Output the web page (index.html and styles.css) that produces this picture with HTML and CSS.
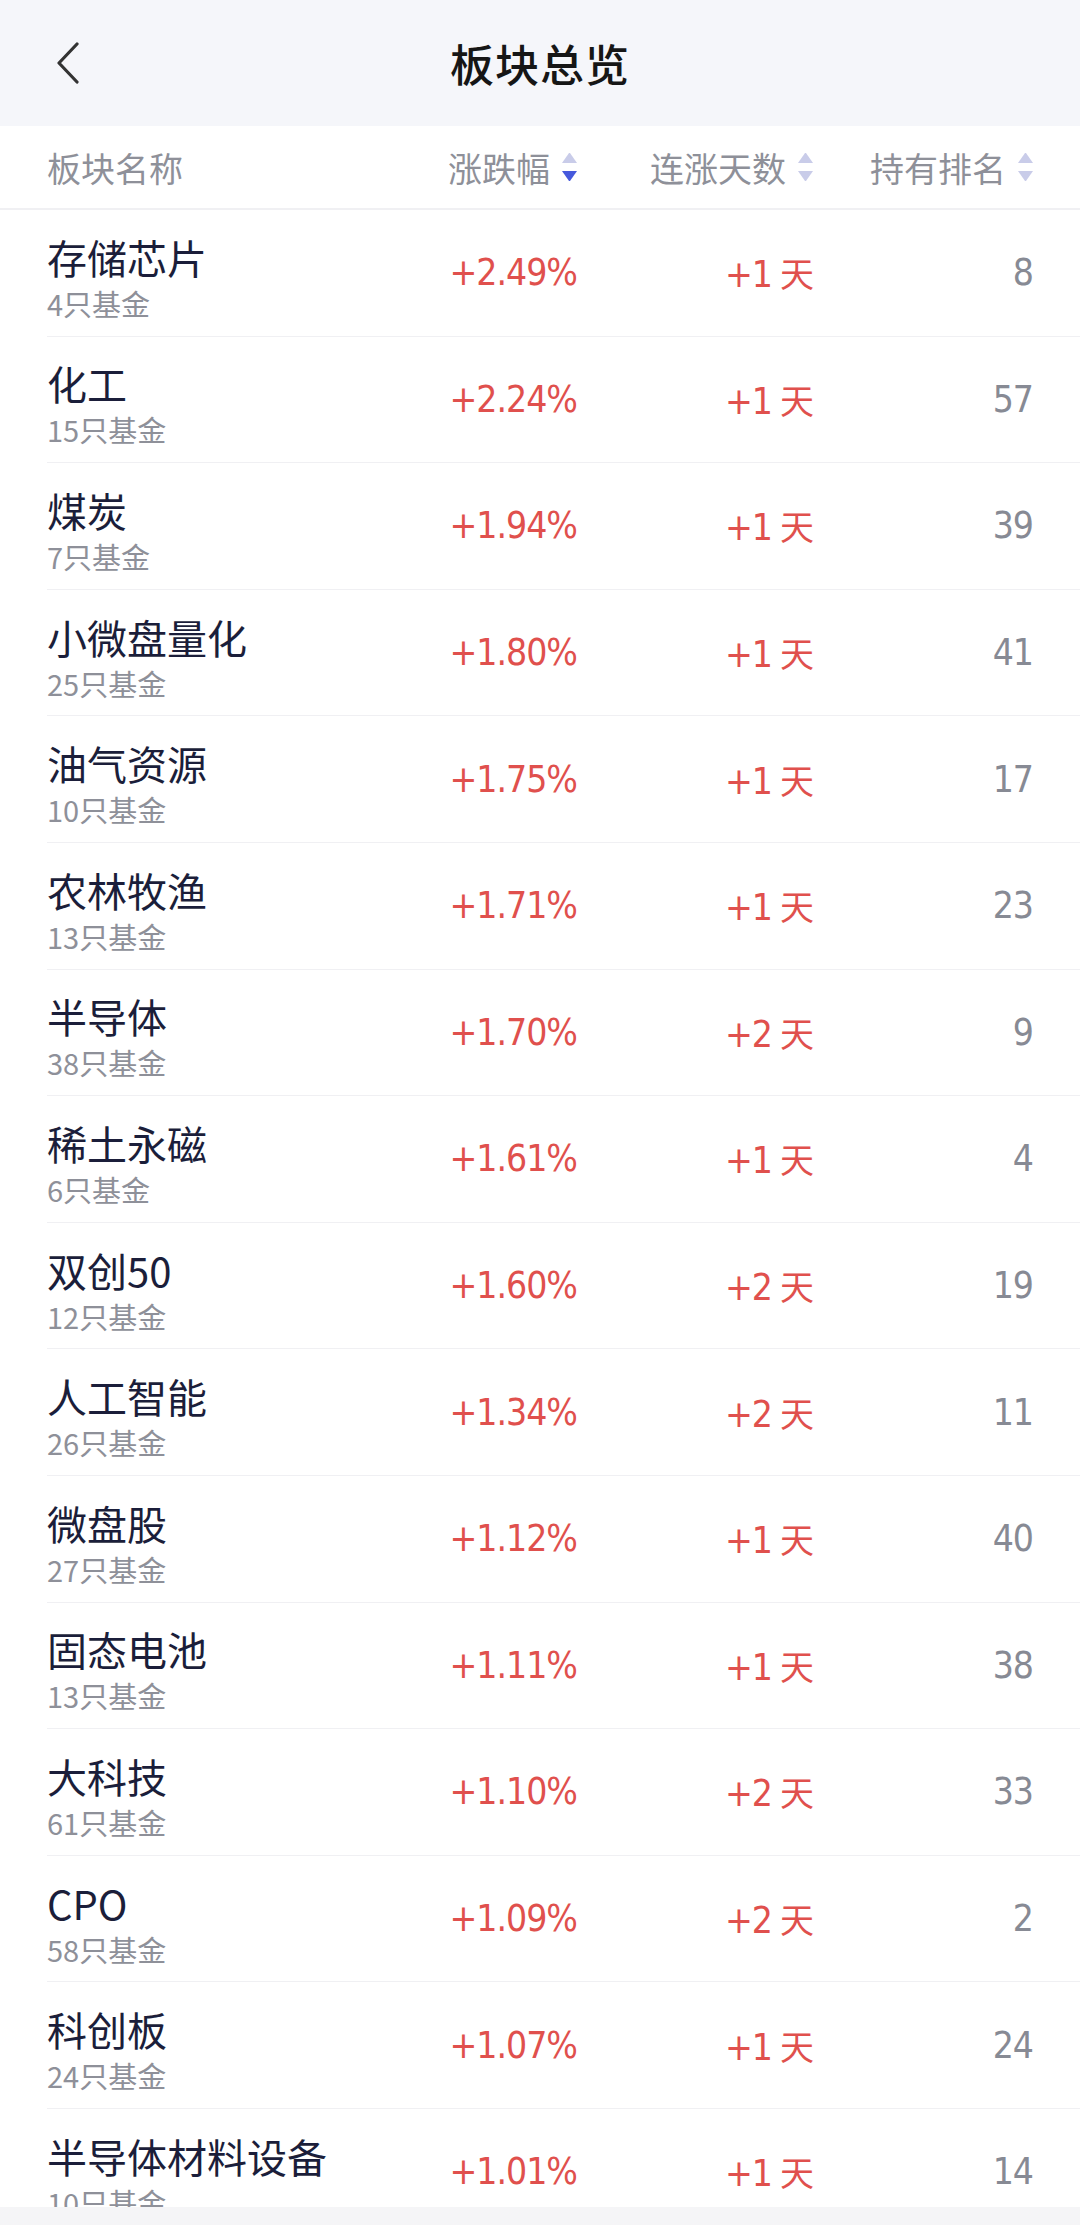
FILE: index.html
```html
<!DOCTYPE html>
<html lang="zh">
<head>
  <meta charset="UTF-8" />
  <meta name="viewport" content="width=device-width, initial-scale=1.0"/>
  <title>板块总览</title>
  <link rel="stylesheet" href="styles.css">
</head>
<body>
  <header class="topbar">
    <button class="back" aria-label="返回">
      <svg width="24" height="42" viewBox="0 0 24 42"><path d="M21 2 L3 21 L21 40" fill="none" stroke="#333" stroke-width="3.2" stroke-linecap="round" stroke-linejoin="round"/></svg>
    </button>
    <h1>板块总览</h1>
  </header>

  <div class="thead">
    <span class="th-name">板块名称</span>
    <span class="th">涨跌幅<i class="sort desc"></i></span>
    <span class="th">连涨天数<i class="sort"></i></span>
    <span class="th">持有排名<i class="sort"></i></span>
  </div>

  <ul id="list" class="list"></ul>

  <div class="navbar"></div>

  <script>
    const rows = [
      ["存储芯片", 4, "+2.49%", "+1", 8],
      ["化工", 15, "+2.24%", "+1", 57],
      ["煤炭", 7, "+1.94%", "+1", 39],
      ["小微盘量化", 25, "+1.80%", "+1", 41],
      ["油气资源", 10, "+1.75%", "+1", 17],
      ["农林牧渔", 13, "+1.71%", "+1", 23],
      ["半导体", 38, "+1.70%", "+2", 9],
      ["稀土永磁", 6, "+1.61%", "+1", 4],
      ["双创50", 12, "+1.60%", "+2", 19],
      ["人工智能", 26, "+1.34%", "+2", 11],
      ["微盘股", 27, "+1.12%", "+1", 40],
      ["固态电池", 13, "+1.11%", "+1", 38],
      ["大科技", 61, "+1.10%", "+2", 33],
      ["CPO", 58, "+1.09%", "+2", 2],
      ["科创板", 24, "+1.07%", "+1", 24],
      ["半导体材料设备", 10, "+1.01%", "+1", 14]
    ];

    const list = document.getElementById("list");
    rows.forEach(r => {
      const li = document.createElement("li");
      li.className = "row";
      li.innerHTML = `
        <div class="name">
          <strong>${r[0]}</strong>
          <small>${r[1]}只基金</small>
        </div>
        <span class="val up">${r[2]}</span>
        <span class="val up">${r[3]}<em>天</em></span>
        <span class="val rank">${r[4]}</span>
      `;
      list.appendChild(li);
    });
  </script>
</body>
</html>
```

FILE: styles.css
```css
:root {
  --bg: #ffffff;
  --head: #f5f6fa;
  --text: #1b1e3a;
  --muted: #8e9099;
  --red: #e0504d;
  --line: #f0f0f3;
  --sort: #c9cce9;
  --sort-on: #4659dc;
}

* {
  margin: 0;
  padding: 0;
  box-sizing: border-box;
}

body {
  background: var(--bg);
  color: var(--text);
  font-family: "Noto Sans CJK SC", "Noto Sans", sans-serif;
  height: 2225px;
  overflow: hidden;
}

.topbar {
  height: 126px;
  background: var(--head);
  display: flex;
  align-items: center;
  justify-content: center;
  position: relative;
}

.topbar h1 {
  font-size: 44px;
  font-weight: 500;
  color: #161616;
  letter-spacing: 1px;
}

.back {
  position: absolute;
  left: 56px;
  top: 42px;
  background: none;
  border: none;
}

.thead {
  height: 84px;
  display: grid;
  grid-template-columns: 1fr 220px 236px 220px;
  align-items: center;
  padding: 0 47px;
  border-bottom: 2px solid var(--line);
  font-size: 34px;
  color: var(--muted);
}

.th {
  display: flex;
  align-items: center;
  justify-content: flex-end;
}

.sort {
  width: 15px;
  height: 30px;
  margin-left: 12px;
  display: flex;
  flex-direction: column;
  justify-content: space-between;
  padding: 1px 0;
}

.sort::before,
.sort::after {
  content: "";
  border-left: 7.5px solid transparent;
  border-right: 7.5px solid transparent;
}

.sort::before {
  border-bottom: 10px solid var(--sort);
}

.sort::after {
  border-top: 10px solid var(--sort);
}

.sort.desc::after {
  border-top-color: var(--sort-on);
}

.list {
  list-style: none;
}

.row {
  height: 126.6px;
  margin-left: 47px;
  padding-right: 47px;
  display: grid;
  grid-template-columns: 1fr 220px 236px 220px;
  align-items: center;
  border-bottom: 1.5px solid var(--line);
}

.name {
  display: flex;
  flex-direction: column;
  padding-top: 9px;
}

.name strong {
  font-size: 40px;
  font-weight: 400;
  line-height: 46px;
}

.name small {
  font-size: 29px;
  line-height: 36px;
  color: var(--muted);
  margin-top: 5px;
}

.val {
  text-align: right;
  font-family: "DejaVu Sans", "Noto Sans", sans-serif;
  font-stretch: condensed;
  font-size: 37px;
  letter-spacing: -1px;
}

.val em {
  font-style: normal;
  font-family: "Noto Sans CJK SC", sans-serif;
  font-size: 34px;
  margin-left: 8px;
}

.up {
  color: var(--red);
}

.rank {
  color: #878a94;
}

.navbar {
  position: fixed;
  left: 0;
  right: 0;
  bottom: 0;
  height: 18px;
  background: #f5f5f7;
}
```
